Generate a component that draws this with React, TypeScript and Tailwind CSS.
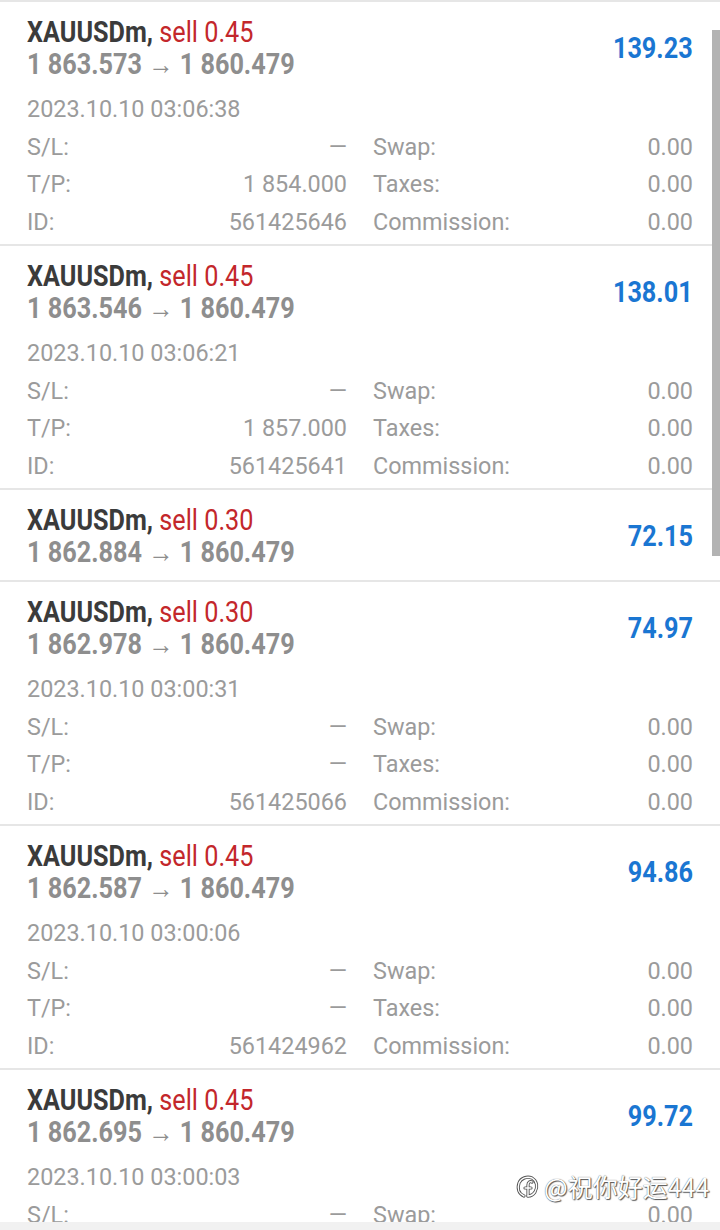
import React from "react";

type Deal = {
  lots: string;
  open: string;
  profit: string;
  date?: string;
  sl?: string;
  tp?: string;
  id?: string;
};

const deals: Deal[] = [
  { lots: "0.45", open: "1 863.573", profit: "139.23", date: "2023.10.10 03:06:38", sl: "—", tp: "1 854.000", id: "561425646" },
  { lots: "0.45", open: "1 863.546", profit: "138.01", date: "2023.10.10 03:06:21", sl: "—", tp: "1 857.000", id: "561425641" },
  { lots: "0.30", open: "1 862.884", profit: "72.15" },
  { lots: "0.30", open: "1 862.978", profit: "74.97", date: "2023.10.10 03:00:31", sl: "—", tp: "—", id: "561425066" },
  { lots: "0.45", open: "1 862.587", profit: "94.86", date: "2023.10.10 03:00:06", sl: "—", tp: "—", id: "561424962" },
  { lots: "0.45", open: "1 862.695", profit: "99.72", date: "2023.10.10 03:00:03", sl: "—", tp: "—", id: "561424900" },
];

const font = "font-['Roboto','Liberation_Sans',sans-serif]";

function Cell({ label, value }: { label: string; value: string }) {
  return (
    <div className="flex h-[37.5px] items-center justify-between">
      <span>{label}</span>
      <span>{value}</span>
    </div>
  );
}

function Row({ d }: { d: Deal }) {
  const expanded = !!d.date;
  return (
    <div className={`border-b-2 border-[#e6e6e6] pl-[27px] pr-[27px] pt-[14px] ${expanded ? "pb-[3px]" : "pb-[12px]"}`}>
      <div className="flex h-[64px] items-center justify-between">
        <div className="flex flex-col">
          <div className="h-[32px] origin-left scale-x-[0.87] whitespace-nowrap text-[29px] leading-[32px]">
            <span className="font-bold text-[#3b3b3b]">XAUUSDm,</span>
            <span className="text-[#c3272b]"> sell {d.lots}</span>
          </div>
          <div className="h-[32px] origin-left scale-x-[0.87] whitespace-nowrap text-[29px] font-bold leading-[32px] text-[#8e8e8e]">
            {d.open} → 1 860.479
          </div>
        </div>
        <div className="origin-right scale-x-[0.87] whitespace-nowrap text-[29px] font-bold leading-[32px] text-[#1a76d2]">
          {d.profit}
        </div>
      </div>
      {expanded && (
        <div className="mt-[11px] text-[23.4px] text-[#9b9b9b]">
          <div className="flex h-[37.5px] items-center">{d.date}</div>
          <div className="grid grid-cols-2 gap-x-[26px]">
            <div className="flex flex-col">
              <Cell label="S/L:" value={d.sl!} />
              <Cell label="T/P:" value={d.tp!} />
              <Cell label="ID:" value={d.id!} />
            </div>
            <div className="flex flex-col">
              <Cell label="Swap:" value="0.00" />
              <Cell label="Taxes:" value="0.00" />
              <Cell label="Commission:" value="0.00" />
            </div>
          </div>
        </div>
      )}
    </div>
  );
}

export default function App() {
  return (
    <div className={`relative flex h-[1230px] w-[720px] flex-col overflow-hidden bg-white ${font}`}>
      <div className="flex-1 overflow-hidden border-t-2 border-[#e6e6e6]">
        {deals.map((d, i) => (
          <Row key={i} d={d} />
        ))}
      </div>
      <div className="h-[8px] bg-[#f1f1f1]" />
      <div className="absolute right-0 top-[30px] h-[526px] w-[8px] bg-[#b3b3b3]" />
      <div className="absolute left-[514px] top-[1170px] flex items-center gap-[2px] whitespace-nowrap font-['Noto_Sans_CJK_SC',sans-serif] text-[25px] leading-[32px] text-white [text-shadow:0_0_1px_#444,1px_1px_1px_#555]">
        <svg width="28" height="28" viewBox="0 0 28 28" className="mt-[2px]">
          <g fill="none" stroke="#555" strokeWidth="3.2" strokeLinecap="round">
            <path d="M10 23 C5 21 3 16 5 10 C7 5 13 3 18 5 C23 8 24 14 21 19 C19 22 16 23 14 23" />
            <path d="M14 23 L14 12 C14 9 16 8 18 9" />
            <path d="M11 15 L17 15" />
          </g>
          <g fill="none" stroke="#fff" strokeWidth="1.4" strokeLinecap="round">
            <path d="M10 23 C5 21 3 16 5 10 C7 5 13 3 18 5 C23 8 24 14 21 19 C19 22 16 23 14 23" />
            <path d="M14 23 L14 12 C14 9 16 8 18 9" />
            <path d="M11 15 L17 15" />
          </g>
        </svg>
        <span>@祝你好运444</span>
      </div>
    </div>
  );
}
